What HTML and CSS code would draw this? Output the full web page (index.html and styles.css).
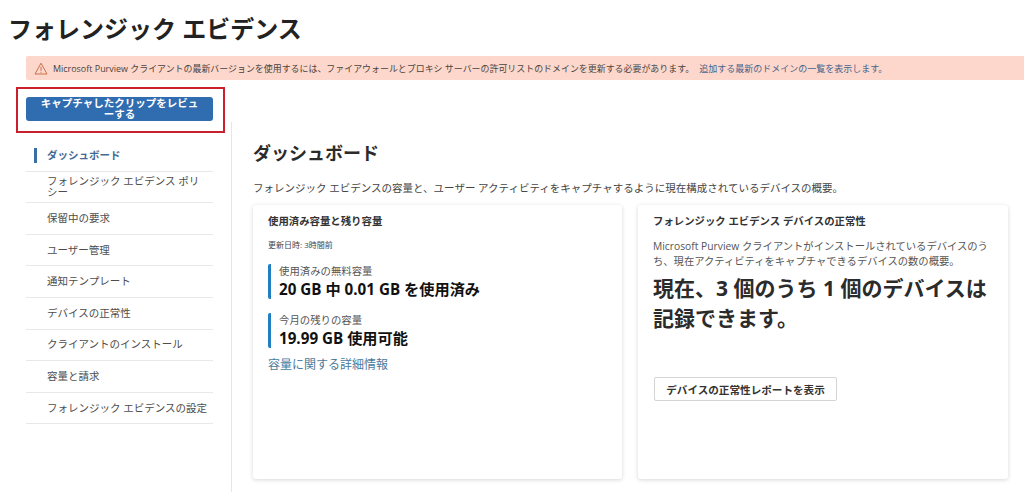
FILE: index.html
```html
<!DOCTYPE html>
<html lang="ja">
<head>
<meta charset="utf-8">
<title>フォレンジック エビデンス</title>
<link rel="stylesheet" href="styles.css">
</head>
<body>
<h1 class="page-title">フォレンジック エビデンス</h1>
<div class="banner">
  <svg class="banner-icon" width="14" height="13" viewBox="0 0 14 13"><path d="M7 1.2 13 12H1Z" fill="none" stroke="#c8724a" stroke-width="1"/><path d="M7 4.8v4M7 9.8v1" stroke="#c8724a" stroke-width="1"/></svg>
  <span class="banner-text">Microsoft Purview クライアントの最新バージョンを使用するには、ファイアウォールとプロキシ サーバーの許可リストのドメインを更新する必要があります。</span>
  <a class="banner-link">追加する最新のドメインの一覧を表示します。</a>
</div>
<div class="layout">
  <aside class="sidebar">
    <div class="review-wrap">
      <button class="review-btn">キャプチャしたクリップをレビューする</button>
      <div class="highlight"></div>
    </div>
    <nav class="nav">
      <div class="nav-item active"><span>ダッシュボード</span></div>
      <div class="nav-item"><span>フォレンジック エビデンス ポリシー</span></div>
      <div class="nav-item"><span>保留中の要求</span></div>
      <div class="nav-item"><span>ユーザー管理</span></div>
      <div class="nav-item"><span>通知テンプレート</span></div>
      <div class="nav-item"><span>デバイスの正常性</span></div>
      <div class="nav-item"><span>クライアントのインストール</span></div>
      <div class="nav-item"><span>容量と請求</span></div>
      <div class="nav-item"><span>フォレンジック エビデンスの設定</span></div>
    </nav>
  </aside>
  <main class="main">
    <h2 class="main-title">ダッシュボード</h2>
    <p class="main-desc">フォレンジック エビデンスの容量と、ユーザー アクティビティをキャプチャするように現在構成されているデバイスの概要。</p>
    <div class="cards">
      <section class="card">
        <h3 class="card-title">使用済み容量と残り容量</h3>
        <p class="updated">更新日時: 3時間前</p>
        <div class="stat">
          <div class="stat-label">使用済みの無料容量</div>
          <div class="stat-value">20 GB 中 0.01 GB を使用済み</div>
        </div>
        <div class="stat">
          <div class="stat-label">今月の残りの容量</div>
          <div class="stat-value">19.99 GB 使用可能</div>
        </div>
        <a class="more-link">容量に関する詳細情報</a>
      </section>
      <section class="card">
        <h3 class="card-title">フォレンジック エビデンス デバイスの正常性</h3>
        <p class="card-desc">Microsoft Purview クライアントがインストールされているデバイスのうち、現在アクティビティをキャプチャできるデバイスの数の概要。</p>
        <p class="big-text">現在、3 個のうち 1 個のデバイスは記録できます。</p>
        <button class="report-btn">デバイスの正常性レポートを表示</button>
      </section>
    </div>
  </main>
</div>
</body>
</html>
```
FILE: styles.css
```css
* { box-sizing: border-box; }
html, body { height: 100%; }
body {
  margin: 0;
  height: 492px;
  overflow: hidden;
  background: #fff;
  color: #2b2b2b;
  font-family: "Open Sans", "Noto Sans CJK JP", sans-serif;
  display: flex;
  flex-direction: column;
}
.page-title {
  margin: 0;
  padding: 13px 0 0 8px;
  height: 56px;
  font-size: 24px;
  line-height: 32px;
  font-weight: 700;
  color: #222;
}
.banner {
  margin-left: 26px;
  height: 24px;
  flex: none;
  background: #fdd7cb;
  border-radius: 2px 0 0 2px;
  display: flex;
  align-items: center;
  padding-left: 8px;
  font-size: 9px;
  color: #4a4440;
  white-space: nowrap;
}
.banner-icon { margin-right: 5px; flex: none; }
.banner-text { font-size: 8.95px; }
.banner-link { margin-left: 5px; color: #46648c; }
.layout { display: flex; flex: 1; min-height: 0; }
.sidebar {
  width: 231px;
  flex: none;
  padding: 17px 18px 0 26px;
}
.review-wrap { position: relative; }
.review-btn {
  display: block;
  width: 187px;
  height: 24px;
  padding: 1px 14px;
  border: 0;
  border-radius: 3px;
  background: #2f6cb0;
  color: #fff;
  font-family: inherit;
  font-size: 10.5px;
  font-weight: 700;
  line-height: 11px;
  text-align: center;
}
.highlight {
  position: absolute;
  left: -10px;
  top: -10px;
  width: 209px;
  height: 46px;
  border: 2px solid #c8202c;
}
.nav { margin-top: 19px; width: 187px; }
.nav-item {
  position: relative;
  height: 31.6px;
  padding: 0 4.5px 0 21px;
  display: flex;
  align-items: center;
  border-bottom: 1px solid #e8e8e8;
  font-size: 10.5px;
  line-height: 11px;
  color: #4d4d4d;
}
.nav-item.active { color: #3f6a96; font-weight: 700; }
.nav-item.active::before {
  content: "";
  position: absolute;
  left: 8px;
  top: 8px;
  width: 3px;
  height: 15px;
  background: #3a6ea5;
}
.main {
  flex: 1;
  margin-top: 42px;
  padding: 19px 16px 0 21px;
  min-width: 0;
  border-left: 1px solid #e6e6e6;
}
.main-title {
  margin: 0;
  font-size: 18px;
  line-height: 24px;
  font-weight: 700;
  color: #2b2b2b;
}
.main-desc {
  margin: 16px 0 0;
  font-size: 10.5px;
  line-height: 14px;
  color: #444;
  white-space: nowrap;
}
.cards {
  display: grid;
  grid-template-columns: 369px 370px;
  gap: 16px;
  margin-top: 10px;
}
.card {
  height: 274px;
  padding: 9px 15px 0;
  background: #fff;
  border-radius: 3px;
  box-shadow: 0 1px 4px rgba(0, 0, 0, 0.16);
}
.card-title {
  margin: 0;
  font-size: 10.4px;
  line-height: 15px;
  font-weight: 700;
  color: #333;
}
.updated {
  margin: 10px 0 0;
  font-size: 8px;
  line-height: 11px;
  color: #444;
}
.stat {
  margin-top: 14px;
  height: 35px;
  padding-left: 8px;
  border-left: 3px solid #1f7fc1;
  border-radius: 2px;
}
.stat + .stat { margin-top: 14px; }
.stat-label {
  font-size: 10.4px;
  line-height: 14px;
  color: #555;
}
.stat-value {
  margin-top: 1px;
  font-size: 15.2px;
  line-height: 20px;
  font-weight: 700;
  color: #111;
}
.more-link {
  display: block;
  margin-top: 9px;
  font-size: 12px;
  line-height: 16px;
  color: #4a7a9c;
}
.card-desc {
  margin: 10px 0 0;
  font-size: 10.3px;
  line-height: 15px;
  color: #555;
}
.big-text {
  margin: 4px 0 0;
  font-size: 21px;
  line-height: 30px;
  font-weight: 700;
  color: #2b2b2b;
}
.report-btn {
  display: block;
  margin-top: 44px;
  margin-left: 1px;
  width: 183px;
  height: 24px;
  padding: 0;
  border: 1px solid #d4d4d4;
  border-radius: 2px;
  background: #fff;
  color: #333;
  font-family: inherit;
  font-size: 10.6px;
  font-weight: 700;
}
```
